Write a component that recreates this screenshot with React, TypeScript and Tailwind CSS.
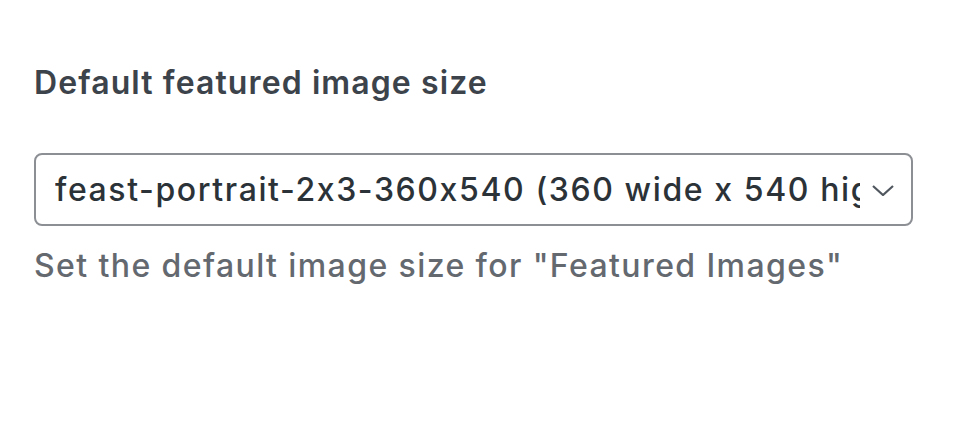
import React from 'react';

const App: React.FC = () => {
    return (
        <div className="min-h-screen w-full bg-white font-['Inter',sans-serif] [font-feature-settings:'calt'_0]">
            <div className="pl-[34px] pr-[63px] pt-[63px]">
                {/* label */}
                <label htmlFor="size" className="block text-[32px] leading-[40px] font-semibold tracking-[1.1px] text-[#3c434a]">
                    Default featured image size
                </label>

                {/* select */}
                <div className="relative mt-[50px] h-[73px] w-[879px] rounded-[8px] border-2 border-[#8c8f94] bg-white">
                    <div className="flex h-full items-center pl-[19px] pr-[51px]">
                        <span className="block overflow-hidden whitespace-nowrap text-[32px] font-medium tracking-[1.6px] text-[#2c3338]">
                            feast-portrait-2x3-360x540 (360 wide x 540 high)
                        </span>
                    </div>
                    <svg
                        className="absolute right-[16px] top-1/2 -translate-y-1/2"
                        width="24"
                        height="12"
                        viewBox="0 0 24 12"
                        fill="none"
                        stroke="#50575e"
                        strokeWidth="2.2"
                    >
                        <path d="M2 2l10 9 10-9" />
                    </svg>
                </div>

                {/* help */}
                <p className="mt-[20px] text-[32px] leading-[40px] font-medium tracking-[1.4px] text-[#646970]">
                    Set the default image size for "Featured Images"
                </p>
            </div>
        </div>
    );
};

export default App;
